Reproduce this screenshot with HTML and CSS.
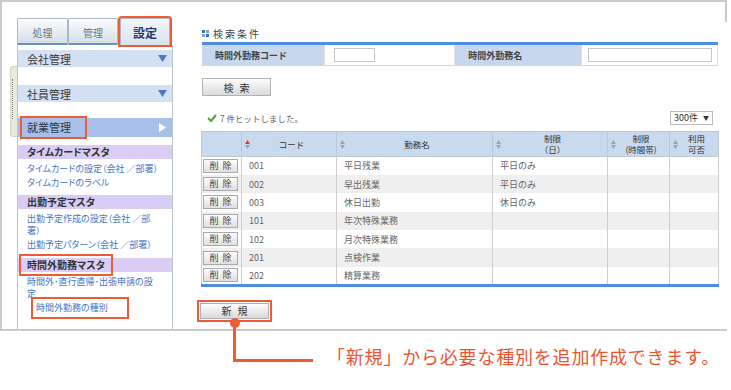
FILE: index.html
```html
<!DOCTYPE html>
<html lang="ja">
<head>
  <meta charset="UTF-8" />
  <title>時間外勤務の種別</title>
  <link rel="stylesheet" href="styles.css">
</head>
<body>
  <div class="screen">
    <!-- Sidebar -->
    <aside class="side">
      <div class="handle"></div>
      <div class="nav">
        <div class="tabs">
          <div class="tab">処理</div>
          <div class="tab">管理</div>
          <div class="tab active mark">設定</div>
        </div>
        <div class="menu">
          <div class="group">会社管理
            <svg width="9" height="7" viewBox="0 0 9 7"><polygon points="0,0 9,0 4.5,7" fill="#4a7ec0"/></svg>
          </div>
          <div class="group">社員管理
            <svg width="9" height="7" viewBox="0 0 9 7"><polygon points="0,0 9,0 4.5,7" fill="#4a7ec0"/></svg>
          </div>
          <div class="group open"><span class="mark">就業管理</span>
            <svg width="7" height="9" viewBox="0 0 7 9"><polygon points="0,0 7,4.5 0,9" fill="#fff"/></svg>
          </div>

          <div class="cat">タイムカードマスタ</div>
          <div class="links">
            <a href="#" class="link">タイムカードの設定（会社 ／部署）</a>
            <a href="#" class="link">タイムカードのラベル</a>
          </div>

          <div class="cat">出勤予定マスタ</div>
          <div class="links">
            <a href="#" class="link">出勤予定作成の設定（会社 ／部<br>署）</a>
            <a href="#" class="link">出勤予定パターン（会社 ／部署）</a>
          </div>

          <div class="cat"><span class="mark">時間外勤務マスタ</span></div>
          <div class="links">
            <a href="#" class="link">時間外･直行直帰･出張申請の設<br>定</a>
            <a href="#" class="link sub"><span class="mark">時間外勤務の種別</span></a>
          </div>
        </div>
      </div>
    </aside>

    <!-- Main -->
    <main class="main">
      <div class="title">
        <svg width="7" height="7" viewBox="0 0 7 7">
          <rect x="0" y="0" width="3" height="3" fill="#3f6fb5"/>
          <rect x="4" y="0" width="3" height="3" fill="#7ea0d4"/>
          <rect x="0" y="4" width="3" height="3" fill="#7ea0d4"/>
          <rect x="4" y="4" width="3" height="3" fill="#3f6fb5"/>
        </svg>
        検索条件
      </div>

      <table class="search">
        <tr>
          <th class="w1">時間外勤務コード</th>
          <td class="w2"><div class="field short"></div></td>
          <th class="w3">時間外勤務名</th>
          <td class="w4"><div class="field long"></div></td>
        </tr>
      </table>

      <button class="btn">検索</button>

      <div class="result">
        <div class="hit">
          <svg width="10" height="8" viewBox="0 0 10 8"><path d="M1 4 L4 7 L9 1" fill="none" stroke="#4aa62e" stroke-width="2"/></svg>
          7 件ヒットしました。
        </div>
        <div class="select">300件 <span class="caret">▼</span></div>
      </div>

      <table class="list">
        <colgroup>
          <col style="width:40px"><col style="width:95px"><col style="width:156px">
          <col style="width:115px"><col style="width:62px"><col style="width:49px">
        </colgroup>
        <thead>
          <tr>
            <th></th>
            <th><div class="th"><svg width="5" height="9" viewBox="0 0 5 9"><polygon points="0,4 2.5,0 5,4" fill="#e03a2f"/><polygon points="0,5 5,5 2.5,9" fill="#9aa3ad"/></svg><span>コード</span></div></th>
            <th><div class="th"><svg width="5" height="9" viewBox="0 0 5 9"><polygon points="0,4 2.5,0 5,4" fill="#9aa3ad"/><polygon points="0,5 5,5 2.5,9" fill="#9aa3ad"/></svg><span>勤務名</span></div></th>
            <th><div class="th"><svg width="5" height="9" viewBox="0 0 5 9"><polygon points="0,4 2.5,0 5,4" fill="#9aa3ad"/><polygon points="0,5 5,5 2.5,9" fill="#9aa3ad"/></svg><span>制限<br>（日）</span></div></th>
            <th><div class="th"><svg width="5" height="9" viewBox="0 0 5 9"><polygon points="0,4 2.5,0 5,4" fill="#9aa3ad"/><polygon points="0,5 5,5 2.5,9" fill="#9aa3ad"/></svg><span>制限<br>(時間帯)</span></div></th>
            <th><div class="th"><svg width="5" height="9" viewBox="0 0 5 9"><polygon points="0,4 2.5,0 5,4" fill="#9aa3ad"/><polygon points="0,5 5,5 2.5,9" fill="#9aa3ad"/></svg><span>利用<br>可否</span></div></th>
          </tr>
        </thead>
        <tbody>
          <tr><td><button class="del">削除</button></td><td>001</td><td>平日残業</td><td>平日のみ</td><td></td><td></td></tr>
          <tr><td><button class="del">削除</button></td><td>002</td><td>早出残業</td><td>平日のみ</td><td></td><td></td></tr>
          <tr><td><button class="del">削除</button></td><td>003</td><td>休日出勤</td><td>休日のみ</td><td></td><td></td></tr>
          <tr><td><button class="del">削除</button></td><td>101</td><td>年次特殊業務</td><td></td><td></td><td></td></tr>
          <tr><td><button class="del">削除</button></td><td>102</td><td>月次特殊業務</td><td></td><td></td><td></td></tr>
          <tr><td><button class="del">削除</button></td><td>201</td><td>点検作業</td><td></td><td></td><td></td></tr>
          <tr><td><button class="del">削除</button></td><td>202</td><td>精算業務</td><td></td><td></td><td></td></tr>
        </tbody>
      </table>

      <button class="btn new mark">新規</button>
    </main>
  </div>

  <!-- Callout -->
  <div class="leader"></div>
  <div class="dot"></div>
  <p class="note">「新規」から必要な種別を追加作成できます。</p>
</body>
</html>
```

FILE: styles.css
```css
* {
  margin: 0;
  padding: 0;
  box-sizing: border-box;
}

body {
  position: relative;
  width: 731px;
  height: 390px;
  overflow: hidden;
  background: #fff;
  color: #333;
  font-family: "Noto Sans CJK JP", "Noto Sans", sans-serif;
}

.mark {
  outline: 2px solid #ef5b34;
}

/* frame of the screenshot */
.screen {
  position: relative;
  display: flex;
  width: 727px;
  height: 331px;
  border: 2px solid #cacaca;
  border-right: none;
  overflow: hidden;
}

.screen::after {
  content: "";
  position: absolute;
  top: 0;
  right: 0;
  width: 2px;
  height: 20px;
  background: #cacaca;
}

/* sidebar */
.side {
  display: flex;
  margin-left: 8px;
}

.handle {
  position: relative;
  width: 7px;
  height: 71px;
  margin-top: 64px;
  background: #ebe8dc;
  border: 1px solid #d8d4c4;
  border-right: none;
  border-radius: 3px 0 0 3px;
}

.handle::before {
  content: "";
  position: absolute;
  left: 1px;
  top: 12px;
  height: 40px;
  border-left: 1px dotted #777;
}

.nav {
  display: flex;
  flex-direction: column;
  width: 156px;
  margin-top: 16px;
}

.tabs {
  display: flex;
  height: 27px;
}

.tab {
  display: flex;
  align-items: center;
  justify-content: center;
  width: 51px;
  font-size: 10px;
  color: #6b7781;
  background: linear-gradient(#fbfcfd, #d2dde6);
  border: 1px solid #aab9c4;
  border-bottom: none;
  border-radius: 2px 2px 0 0;
  box-shadow: inset 0 -2px 0 #6790c9;
}

.tab + .tab {
  width: 50px;
}

.tab.active {
  margin-left: 2px;
  font-size: 12px;
  font-weight: bold;
  color: #26396a;
  background: linear-gradient(#f1f5f8, #d8e3ec);
  box-shadow: none;
}

.menu {
  flex: 1;
  padding-top: 5px;
  border-left: 1px solid #b9c5cd;
  border-right: 1px solid #b9c5cd;
}

.group {
  display: flex;
  align-items: center;
  justify-content: space-between;
  height: 17px;
  padding: 0 5px 0 9px;
  background: #d4e1f2;
  font-size: 11px;
  color: #3b3b3b;
}

.group + .group {
  margin-top: 18px;
}

.group.open {
  height: 19px;
  margin-top: 16px;
  padding-right: 6px;
  background: #a8c0e7;
  color: #2e3a4f;
}

.group.open .mark {
  display: inline-block;
  line-height: 19px;
  margin-left: -5px;
  padding: 0 14px 0 5px;
}

.cat {
  height: 14px;
  margin-top: 8px;
  padding-left: 9px;
  line-height: 14px;
  background: #d9cdf5;
  font-size: 10px;
  font-weight: bold;
  color: #333;
  font-feature-settings: "palt";
}

.links + .cat {
  margin-top: 6px;
}

.links + .cat + .links + .cat {
  margin-top: 7px;
}

.cat .mark {
  display: inline-block;
  margin-left: -4px;
  padding: 0 4px;
  outline-offset: 2px;
}

.links {
  padding: 4px 0 0 9px;
}

.link {
  display: block;
  margin-bottom: 2px;
  font-size: 9px;
  line-height: 12px;
  color: #4474c4;
  text-decoration: none;
  white-space: nowrap;
  font-feature-settings: "palt";
}

.link.sub {
  margin-left: 9px;
}

.link.sub .mark {
  display: inline-block;
  padding-right: 16px;
  outline-offset: 3px;
}

/* main */
.main {
  display: flex;
  flex-direction: column;
  align-items: flex-start;
  width: 517px;
  margin-left: 28px;
  padding-top: 25px;
}

.title {
  display: flex;
  align-items: center;
  gap: 4px;
  height: 12px;
  margin-left: 1px;
  font-size: 10px;
  letter-spacing: 2px;
  color: #444;
}

.search {
  width: 516px;
  margin: 3px 0 0 1px;
  border-collapse: collapse;
  border-top: 3px solid #4c8ee2;
  border-bottom: 1px solid #d6d6d6;
}

.search th,
.search td {
  height: 22px;
}

.search th {
  padding-left: 13px;
  text-align: left;
  background: #c7d8ee;
  font-size: 9px;
  color: #444;
}

.search td {
  border-left: 1px solid #e2e2e2;
  border-right: 1px solid #e2e2e2;
}

.w1 { width: 123px; }
.w2 { width: 130px; }
.w3 { width: 127px; }
.w4 { width: 136px; }

.field {
  height: 14px;
  border: 1px solid #c6c6c6;
  background: #fff;
}

.field.short {
  width: 41px;
  margin-left: 9px;
}

.field.long {
  width: 124px;
  margin-left: 6px;
}

.btn {
  width: 69px;
  height: 18px;
  margin: 12px 0 0 1px;
  border: 1px solid #b1b1b1;
  background: linear-gradient(#fdfdfd, #dadada);
  font-family: inherit;
  font-size: 10px;
  letter-spacing: 6px;
  text-indent: 6px;
  color: #333;
}

.result {
  display: flex;
  align-items: center;
  justify-content: space-between;
  width: 100%;
  height: 15px;
  margin-top: 14px;
}

.hit {
  display: flex;
  align-items: center;
  gap: 3px;
  padding-left: 6px;
  font-size: 8.5px;
  color: #666;
}

.select {
  height: 14px;
  margin-right: 5px;
  padding: 0 3px;
  border: 1px solid #bbb;
  font-size: 9px;
  line-height: 12px;
  color: #333;
}

.caret {
  font-size: 6px;
  margin-left: 3px;
  vertical-align: 1px;
}

.list {
  width: 517px;
  margin-top: 6px;
  border-collapse: collapse;
  border: 1px solid #c4c4c4;
  border-bottom: 3px solid #4c8ee2;
  table-layout: fixed;
}

.list th {
  height: 25px;
  padding: 0 3px;
  background: #c9daef;
  border: 1px solid #bfc9d4;
  font-size: 8.5px;
  font-weight: normal;
  line-height: 11px;
  color: #333;
}

.th {
  display: flex;
  align-items: center;
}

.th span {
  flex: 1;
  text-align: center;
}

.list td {
  height: 18.4px;
  padding-left: 7px;
  border-left: 1px solid #cfcfcf;
  border-right: 1px solid #cfcfcf;
  font-size: 9px;
  color: #666;
}

.list td:first-child {
  padding: 0 0 0 1px;
}

.list tbody tr:nth-child(even) {
  background: #efefef;
}

.del {
  display: block;
  width: 35px;
  height: 14px;
  border: 1px solid #aaa;
  background: linear-gradient(#fdfdfd, #e0e0e0);
  font-family: inherit;
  font-size: 9px;
  line-height: 12px;
  letter-spacing: 4px;
  text-indent: 4px;
  color: #444;
}

.btn.new {
  margin: 16px 0 0 -1px;
  height: 16px;
  line-height: 14px;
  outline-offset: 1px;
}

/* annotation */
.leader {
  position: absolute;
  left: 233px;
  top: 323px;
  width: 80px;
  height: 39px;
  border-left: 3px solid #ef5b34;
  border-bottom: 3px solid #ef5b34;
}

.dot {
  position: absolute;
  left: 230px;
  top: 318px;
  width: 10px;
  height: 10px;
  border-radius: 50%;
  background: #ef5b34;
}

.note {
  margin: 15px 0 0 327px;
  font-size: 18px;
  line-height: 20px;
  letter-spacing: 0.8px;
  color: #ea5530;
  white-space: nowrap;
}
```
